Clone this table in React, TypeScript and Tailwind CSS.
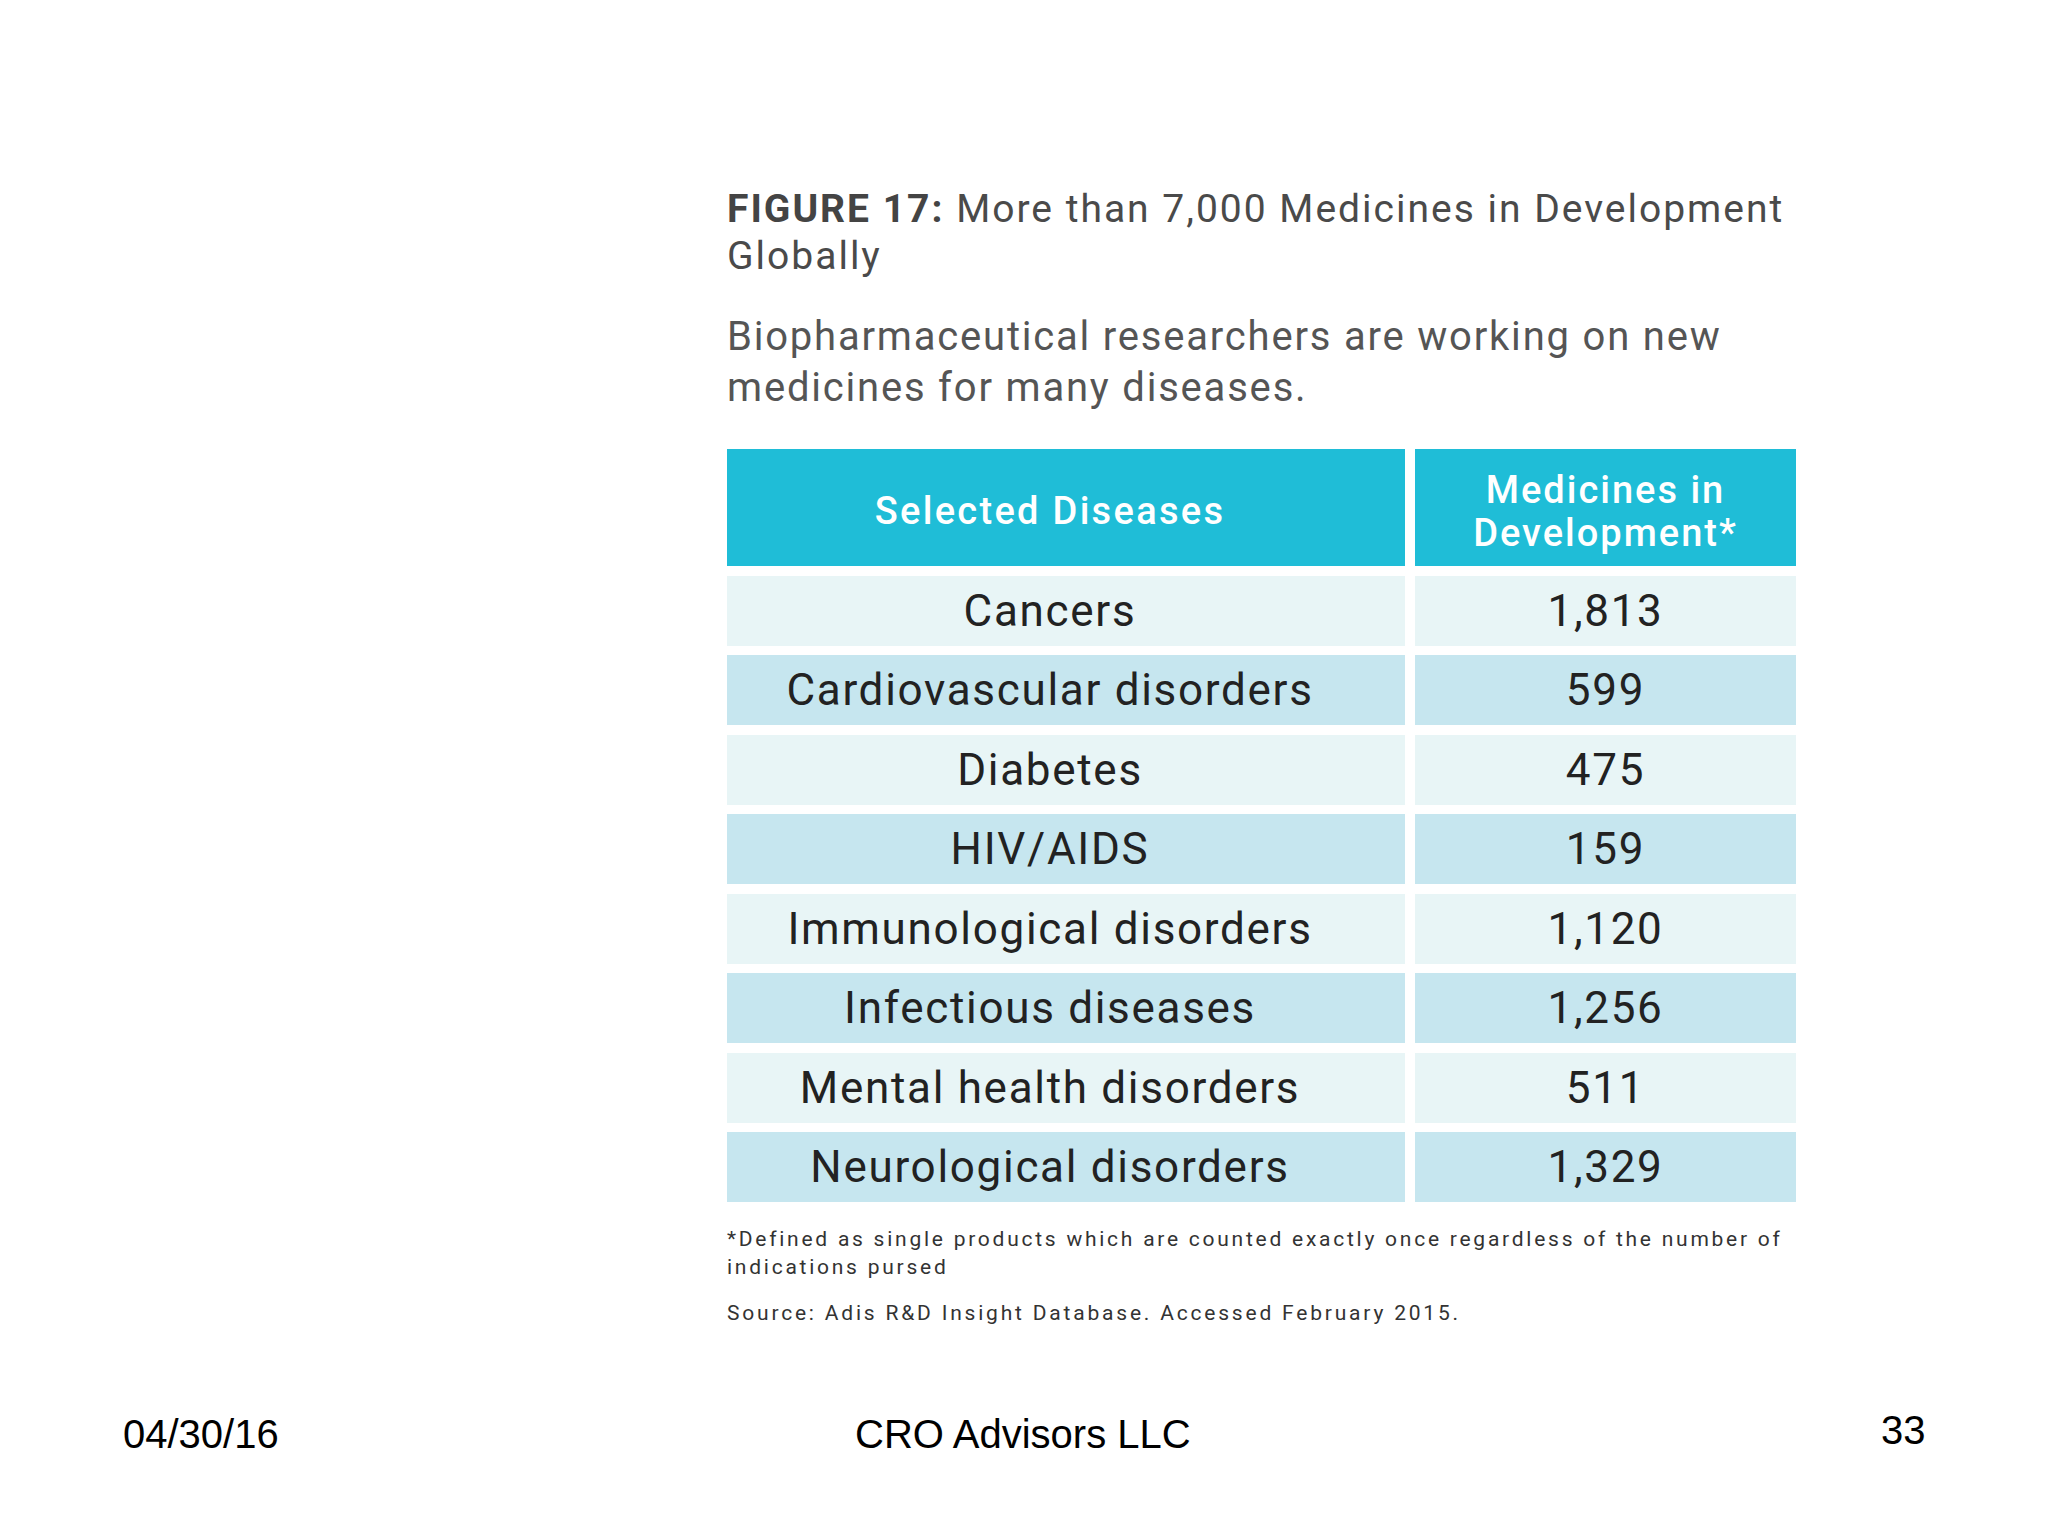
import React from "react";

const rows: [string, string][] = [
  ["Cancers", "1,813"],
  ["Cardiovascular disorders", "599"],
  ["Diabetes", "475"],
  ["HIV/AIDS", "159"],
  ["Immunological disorders", "1,120"],
  ["Infectious diseases", "1,256"],
  ["Mental health disorders", "511"],
  ["Neurological disorders", "1,329"],
];

export default function App() {
  return (
    <div className="w-[2048px] h-[1536px] bg-white flex flex-col overflow-hidden">
      <div className="pl-[727px] pt-[186px] w-[1802px]" style={{ fontFamily: "Roboto, 'Noto Sans', sans-serif" }}>
        <div className="text-[39px] leading-[47px] text-[#4a4a4a] tracking-[2px]">
          <span className="font-bold text-[#444]">FIGURE 17:</span> More than 7,000 Medicines in Development
          <br />
          Globally
        </div>
        <div className="mt-[31px] text-[40px] leading-[51px] text-[#555] tracking-[1.8px]">
          Biopharmaceutical researchers are working on new
          <br />
          medicines for many diseases.
        </div>
        <div className="mt-[36px] grid grid-cols-[678px_381px] gap-x-[10px] gap-y-[9.5px]">
          <div className="h-[117px] bg-[#1fbdd7] text-white font-medium text-[38px] tracking-[2.3px] flex items-center justify-center pr-[32px] pt-[7px] leading-[43px]">
            Selected Diseases
          </div>
          <div className="h-[117px] bg-[#1fbdd7] text-white font-medium text-[38px] tracking-[2px] flex items-center justify-center pt-[8px] text-center leading-[43px]">
            Medicines in
            <br />
            Development*
          </div>
          {rows.map(([d, n], i) => {
            const bg = i % 2 === 0 ? "bg-[#e8f5f6]" : "bg-[#c6e6ef]";
            return (
              <React.Fragment key={d}>
                <div className={`h-[70px] ${bg} flex items-center justify-center pr-[32px] text-[44px] text-[#222] tracking-[1.7px]`}>
                  {d}
                </div>
                <div className={`h-[70px] ${bg} flex items-center justify-center text-[44px] text-[#222] tracking-[1.7px]`}>
                  {n}
                </div>
              </React.Fragment>
            );
          })}
        </div>
        <div className="mt-[23px] text-[21px] leading-[28px] text-[#333] tracking-[2.75px] whitespace-nowrap">
          *Defined as single products which are counted exactly once regardless of the number of
          <br />
          indications pursed
        </div>
        <div className="mt-[18px] text-[21px] leading-[28px] text-[#333] tracking-[2.8px] whitespace-nowrap">
          Source: Adis R&amp;D Insight Database. Accessed February 2015.
        </div>
      </div>
      <div className="flex-1" />
      <div
        className="grid grid-cols-[732px_1026px_auto] items-start pl-[123px] pb-[76px] text-[40px] leading-[52px] text-black"
        style={{ fontFamily: "'Liberation Sans', Arial, sans-serif" }}
      >
        <span>04/30/16</span>
        <span>CRO Advisors LLC</span>
        <span className="-mt-[4px]">33</span>
      </div>
    </div>
  );
}
